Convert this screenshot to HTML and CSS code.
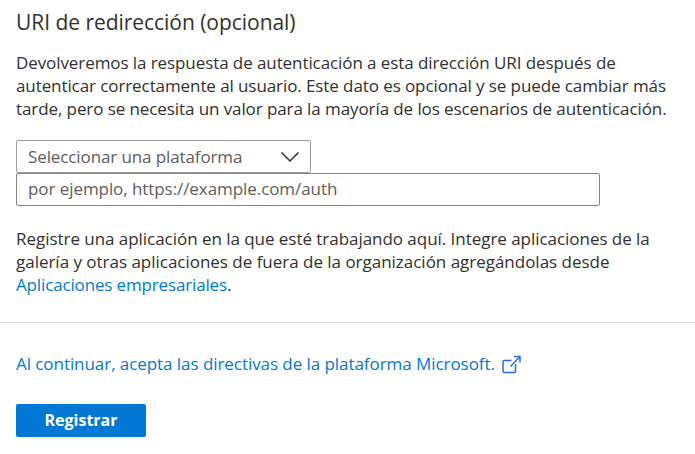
FILE: index.html
```html
<!DOCTYPE html>
<html lang="es">
<head>
<meta charset="utf-8">
<title>Registrar una aplicación</title>
<link rel="stylesheet" href="styles.css">
</head>
<body>
<main class="form">
  <h1 class="title">URI de redirección (opcional)</h1>
  <p class="text">
    <span class="line l1">Devolveremos la respuesta de autenticación a esta dirección URI después de</span>
    <span class="line l2">autenticar correctamente al usuario. Este dato es opcional y se puede cambiar más</span>
    <span class="line l3">tarde, pero se necesita un valor para la mayoría de los escenarios de autenticación.</span>
  </p>
  <div class="select"><span class="select-label">Seleccionar una plataforma</span>
    <svg class="chevron" width="20" height="12" viewBox="0 0 20 12"><path d="M1.5 1.5 10 10l8.5-8.5"/></svg>
  </div>
  <div class="input"><span class="placeholder">por ejemplo, https://example.com/auth</span></div>
  <p class="text note">
    <span class="line l6">Registre una aplicación en la que esté trabajando aquí. Integre aplicaciones de la</span>
    <span class="line l7">galería y otras aplicaciones de fuera de la organización agregándolas desde</span>
    <span class="line l8"><a class="link">Aplicaciones empresariales</a>.</span>
  </p>
</main>
<footer class="footer">
  <a class="link policy"><span class="policy-label">Al continuar, acepta las directivas de la plataforma Microsoft.</span>
    <svg class="external" width="20" height="20" viewBox="0 0 20 20"><path d="M10.5 6.500H3.500Q2 6.500 2 8v9q0 1.500 1.500 1.500h9.500q1.500 0 1.500-1.500V10M13 2.500h6V8.500M19 2.500 9.500 12.500"/></svg>
  </a>
  <button class="button">Registrar</button>
</footer>
</body>
</html>
```
FILE: styles.css
```css
* { box-sizing: border-box; }
body { margin: 0; background: #fff; color: #323130; font: 400 17px/23px "Open Sans", "Noto Sans", sans-serif; }
.form { height: 323px; padding: 8px 16px 0; border-bottom: 1px solid #dcdcdc; }
.title { margin: 0; font-size: 21px; line-height: 28px; font-weight: 400; letter-spacing: -0.04px; }
.text { margin: 15px 0 0; }
.line { display: block; white-space: nowrap; width: max-content; }
.l1 { letter-spacing: -0.085px; }
.l2, .l3 { letter-spacing: -0.09px; }
.l6 { letter-spacing: -0.04px; }
.l7 { letter-spacing: -0.02px; }
.l8 { letter-spacing: -0.15px; }
.select, .input { display: flex; align-items: center; justify-content: space-between; height: 33px; padding: 0 11px; border: 1px solid #868482; border-radius: 2px; color: #605e5c; }
.select { width: 295px; margin-top: 20px; padding-right: 10px; border-color: #a09e9c; }
.select-label { letter-spacing: -0.11px; }
.input { width: 584px; padding-bottom: 2px; }
.placeholder { letter-spacing: -0.07px; }
.note { margin-top: 21px; }
.link { color: #0078d4; }
svg { fill: none; stroke: currentColor; stroke-width: 1.5; }
.chevron { color: #323130; }
.external { color: #1f6fe0; margin-top: 2px; }
.footer { padding: 28px 16px 0; }
.policy { display: flex; align-items: center; gap: 6px; height: 24px; }
.policy-label { letter-spacing: -0.06px; }
.button { display: block; width: 130px; height: 33px; margin-top: 29px; padding: 0 0 1px; border: 0; border-radius: 2px; background: #0078d4; color: #fff; font: 700 16px/23px "Open Sans", sans-serif; }
```
